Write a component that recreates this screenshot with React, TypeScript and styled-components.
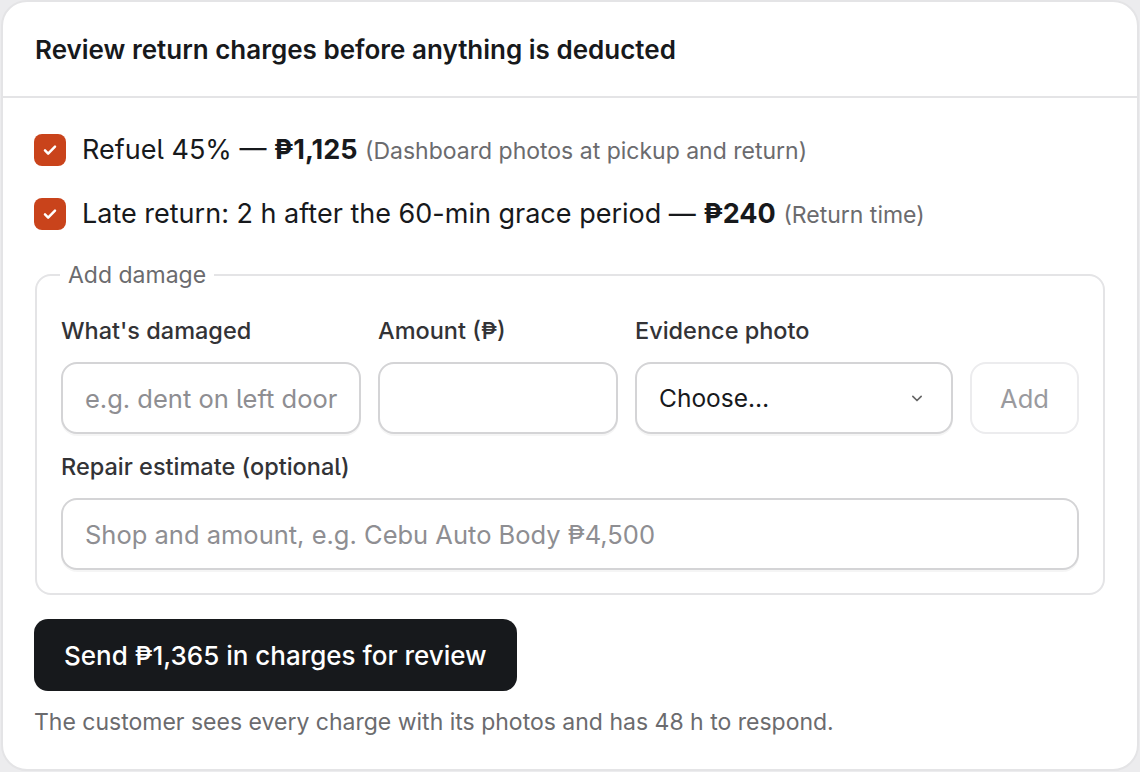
import React from "react";
import styled, { createGlobalStyle } from "styled-components";

const GlobalStyle = createGlobalStyle`
  html, body {
    margin: 0;
    padding: 0;
    background: #ececee;
  }
  body {
    font-family: Inter, "Noto Sans", "Liberation Sans", sans-serif;
    font-feature-settings: "cv05";
    color: #17191c;
    -webkit-font-smoothing: antialiased;
  }
  * {
    box-sizing: border-box;
  }
`;

type Charge = {
  label: string;
  amount: string;
  note: string;
};

const charges: Charge[] = [
  { label: "Refuel 45%", amount: "₱1,125", note: "Dashboard photos at pickup and return" },
  { label: "Late return: 2 h after the 60-min grace period", amount: "₱240", note: "Return time" },
];

const CheckIcon = () => (
  <svg width="20" height="20" viewBox="0 0 24 24" fill="none">
    <path d="M6 12.5l3.8 3.8L18 8" stroke="#fff" strokeWidth="3" strokeLinecap="round" strokeLinejoin="round" />
  </svg>
);

const ChevronIcon = () => (
  <svg width="20" height="20" viewBox="0 0 24 24" fill="none">
    <path d="M7 10l5 5 5-5" stroke="#666" strokeWidth="2" strokeLinecap="round" strokeLinejoin="round" />
  </svg>
);

export default function App() {
  return (
    <>
      <GlobalStyle />
      <Page>
        <Card>
          <Header>
            <Title>Review return charges before anything is deducted</Title>
          </Header>
          <Body>
            <ChargeList>
              {charges.map((c) => (
                <ChargeRow key={c.label}>
                  <Box>
                    <CheckIcon />
                  </Box>
                  <ChargeText>
                    {c.label} — <Amount>{c.amount}</Amount> <Note>({c.note})</Note>
                  </ChargeText>
                </ChargeRow>
              ))}
            </ChargeList>

            <Fieldset>
              <Legend>Add damage</Legend>
              <DamageGrid>
                <Label>What's damaged</Label>
                <Label>Amount (₱)</Label>
                <Label>Evidence photo</Label>
                <span />
                <Input placeholder="e.g. dent on left door" />
                <Input />
                <Select>
                  <span>Choose…</span>
                  <ChevronIcon />
                </Select>
                <AddButton disabled>Add</AddButton>
              </DamageGrid>
              <Label $top>Repair estimate (optional)</Label>
              <Input placeholder="Shop and amount, e.g. Cebu Auto Body ₱4,500" />
            </Fieldset>

            <SendButton>Send ₱1,365 in charges for review</SendButton>
            <Footnote>The customer sees every charge with its photos and has 48 h to respond.</Footnote>
          </Body>
        </Card>
      </Page>
    </>
  );
}

const Page = styled.div`
  padding: 0 1px;
  height: 772px;
  display: flex;
`;

const Card = styled.div`
  flex: 1;
  height: 771px;
  background: #fff;
  border: 2px solid #e4e4e6;
  border-radius: 26px;
  display: flex;
  flex-direction: column;
`;

const Header = styled.div`
  height: 96px;
  padding: 0 32px;
  display: flex;
  align-items: center;
  border-bottom: 2px solid #e4e4e6;
`;

const Title = styled.h1`
  margin: 0;
  font-size: 26px;
  font-weight: 600;
  color: #17191c;
`;

const Body = styled.div`
  padding: 36px 32px 0 31px;
  display: flex;
  flex-direction: column;
`;

const ChargeList = styled.div`
  display: flex;
  flex-direction: column;
  gap: 32px;
`;

const ChargeRow = styled.div`
  display: flex;
  align-items: center;
  gap: 16px;
  height: 32px;
`;

const Box = styled.div`
  width: 32px;
  height: 32px;
  border-radius: 8px;
  background: #c9431b;
  display: flex;
  align-items: center;
  justify-content: center;
  flex-shrink: 0;
`;

const ChargeText = styled.div`
  font-size: 27px;
  line-height: 32px;
  white-space: nowrap;
  color: #17191c;
`;

const Amount = styled.b`
  font-weight: 700;
`;

const Note = styled.span`
  font-size: 23px;
  color: #6b6b6e;
`;

const Fieldset = styled.fieldset`
  margin: 31px 0 0 1px;
  padding: 28px 24px 23px;
  border: 2px solid #e4e4e6;
  border-radius: 16px;
  display: flex;
  flex-direction: column;
`;

const Legend = styled.legend`
  margin-left: -1px;
  padding: 0 8px;
  font-size: 23px;
  line-height: 28px;
  color: #6b6b6e;
`;

const DamageGrid = styled.div`
  display: grid;
  grid-template-columns: 300fr 240fr 318fr 109px;
  column-gap: 17px;
  row-gap: 17px;
  align-items: end;
`;

const Label = styled.label<{ $top?: boolean }>`
  display: block;
  font-size: 23.5px;
  line-height: 28px;
  font-weight: 500;
  white-space: nowrap;
  color: #333336;
  margin: ${(p) => (p.$top ? "19px 0 17px" : "0")};
`;

const fieldBase = `
  height: 72px;
  border: 2px solid #d4d4d6;
  border-radius: 16px;
  background: #fff;
  box-shadow: 0 2px 0 rgba(0, 0, 0, 0.04);
  font-family: Inter, "Noto Sans", "Liberation Sans", sans-serif;
  font-feature-settings: "cv05";
  font-size: 25.5px;
  padding: 0 20px 0 22px;
`;

const Input = styled.input`
  ${fieldBase}
  width: 100%;
  color: #17191c;
  outline: none;
  &::placeholder {
    color: #8e8e92;
  }
`;

const Select = styled.div`
  ${fieldBase}
  display: flex;
  align-items: center;
  justify-content: space-between;
  padding-right: 24px;
  font-size: 24.5px;
  color: #17191c;
`;

const AddButton = styled.button`
  height: 72px;
  border: 2px solid #ececee;
  border-radius: 16px;
  background: #fff;
  font-family: Inter, "Noto Sans", "Liberation Sans", sans-serif;
  font-size: 25.5px;
  color: #9a9a9e;
`;

const SendButton = styled.button`
  align-self: flex-start;
  margin-top: 24px;
  height: 72px;
  padding: 0 30px;
  border: none;
  border-radius: 14px;
  background: #17191c;
  color: #fff;
  font-family: Inter, "Noto Sans", "Liberation Sans", sans-serif;
  font-feature-settings: "cv05";
  font-size: 26px;
  font-weight: 500;
`;

const Footnote = styled.p`
  margin: 17px 0 0;
  font-size: 23px;
  line-height: 28px;
  color: #6b6b6e;
`;
